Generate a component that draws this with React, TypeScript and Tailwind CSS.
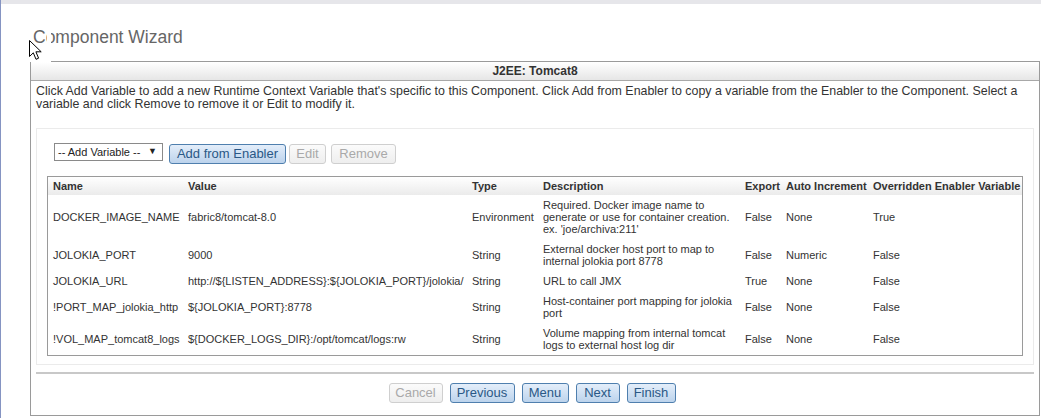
const rows = [
  {
    name: "DOCKER_IMAGE_NAME",
    value: "fabric8/tomcat-8.0",
    type: "Environment",
    desc: "Required. Docker image name to generate or use for container creation. ex. 'joe/archiva:211'",
    exp: "False",
    auto: "None",
    over: "True",
  },
  {
    name: "JOLOKIA_PORT",
    value: "9000",
    type: "String",
    desc: "External docker host port to map to internal jolokia port 8778",
    exp: "False",
    auto: "Numeric",
    over: "False",
  },
  {
    name: "JOLOKIA_URL",
    value: "http://${LISTEN_ADDRESS}:${JOLOKIA_PORT}/jolokia/",
    type: "String",
    desc: "URL to call JMX",
    exp: "True",
    auto: "None",
    over: "False",
  },
  {
    name: "!PORT_MAP_jolokia_http",
    value: "${JOLOKIA_PORT}:8778",
    type: "String",
    desc: "Host-container port mapping for jolokia port",
    exp: "False",
    auto: "None",
    over: "False",
  },
  {
    name: "!VOL_MAP_tomcat8_logs",
    value: "${DOCKER_LOGS_DIR}:/opt/tomcat/logs:rw",
    type: "String",
    desc: "Volume mapping from internal tomcat logs to external host log dir",
    exp: "False",
    auto: "None",
    over: "False",
  },
];

const blueBtn =
  "h-[20px] px-0 rounded-[3px] border border-[#4f7fae] bg-linear-to-b from-[#e4eefa] to-[#bcd3ec] text-[13px] leading-[18px] text-[#2a5886]";
const greyBtn =
  "h-[20px] px-0 rounded-[3px] border border-[#cfcfcf] bg-linear-to-b from-[#fbfbfb] to-[#eeeeee] text-[13px] leading-[18px] text-[#a9a9a9]";

function Cursor() {
  return (
    <>
      {/* white backing left behind by the captured pointer */}
      <div className="absolute left-[46px] top-[28px] w-[4px] h-[34px] bg-white" />
      <div className="absolute left-[28px] top-[47px] w-[22px] h-[15px] bg-white" />
      <svg className="absolute left-[28px] top-[40px]" width="14" height="21" viewBox="0 0 14 21">
        <path
          d="M0.5 0.5 L0.5 16.5 L4.3 12.8 L7 19.3 L9.6 18.2 L6.9 11.8 L12.2 11.8 Z"
          fill="white"
          stroke="black"
          strokeWidth="1"
          strokeLinejoin="miter"
        />
      </svg>
    </>
  );
}

export default function App() {
  return (
    <div className="relative w-[1041px] h-[418px] overflow-hidden bg-white border-l border-[#8594c2] font-['Liberation_Sans',Arial,sans-serif] text-[#333]">
      <div className="h-[4px] bg-[#e6e6ea]" />

      <h1 className="mt-[23px] pl-[32px] h-[20px] text-[17.5px] leading-[20px] text-[#666] font-normal">
        Component Wizard
      </h1>

      {/* Wizard panel */}
      <div className="ml-[29px] mt-[14px] w-[1010px] border border-[#9a9a9a]">
        <div className="h-[19px] border-b border-[#a8a8a8] bg-linear-to-b from-white to-[#e6e6e6] text-center text-[12px] leading-[18px] font-bold text-[#333]">
          J2EE: Tomcat8
        </div>

        <p className="pt-[4px] px-[5px] text-[12.4px] leading-[13px]">
          Click Add Variable to add a new Runtime Context Variable that's specific to this Component. Click Add from
          Enabler to copy a variable from the Enabler to the Component. Select a variable and click Remove to remove it
          or Edit to modify it.
        </p>

        <div className="mx-[5px] mt-[17px] border border-[#ebebeb] px-[10px] pt-[14px] pb-[8px]">
          <div className="flex items-start ml-[7px]">
            <div className="w-[109px] h-[18px] border border-[#8a8a8a] bg-white flex items-center justify-between pl-[3px] pr-[5px] text-[11px] text-[#222]">
              <span>-- Add Variable --</span>
              <span className="text-[9px]">▼</span>
            </div>
            <button className={`${blueBtn} ml-[6px] mt-[1px] w-[117px]`}>Add from Enabler</button>
            <button className={`${greyBtn} ml-[3px] mt-[1px] w-[37px]`}>Edit</button>
            <button className={`${greyBtn} ml-[5px] mt-[1px] w-[65px]`}>Remove</button>
          </div>

          <div className="mt-[12px] border border-[#9a9a9a]">
            <table className="w-full table-fixed border-collapse text-[11px] leading-[12px]">
              <colgroup>
                <col className="w-[135px]" />
                <col className="w-[284px]" />
                <col className="w-[71px]" />
                <col className="w-[202px]" />
                <col className="w-[41px]" />
                <col className="w-[87px]" />
                <col />
              </colgroup>
              <thead>
                <tr className="bg-linear-to-b from-white to-[#ebebeb] text-left">
                  {["Name", "Value", "Type", "Description", "Export", "Auto Increment", "Overridden Enabler Variable"].map(
                    (h) => (
                      <th key={h} className="pl-[5px] py-[3px] font-bold whitespace-nowrap overflow-hidden">
                        {h}
                      </th>
                    )
                  )}
                </tr>
              </thead>
              <tbody>
                {rows.map((r) => (
                  <tr key={r.name}>
                    <td className="pl-[5px] py-[4px] whitespace-nowrap">{r.name}</td>
                    <td className="pl-[5px] py-[4px] whitespace-nowrap">{r.value}</td>
                    <td className="pl-[5px] py-[4px] whitespace-nowrap">{r.type}</td>
                    <td className="px-[5px] py-[4px]">{r.desc}</td>
                    <td className="pl-[5px] py-[4px] whitespace-nowrap">{r.exp}</td>
                    <td className="pl-[5px] py-[4px] whitespace-nowrap">{r.auto}</td>
                    <td className="pl-[5px] py-[4px] whitespace-nowrap">{r.over}</td>
                  </tr>
                ))}
              </tbody>
            </table>
          </div>
        </div>

        <div className="mx-[5px] mt-[7px] h-[2px] bg-[#c8c8c8]" />

        <div className="flex justify-center gap-[7px] mt-[9px] pb-[12px] pr-[6px]">
          <button className={`${greyBtn} w-[54px]`}>Cancel</button>
          <button className={`${blueBtn} w-[65px]`}>Previous</button>
          <button className={`${blueBtn} w-[47px]`}>Menu</button>
          <button className={`${blueBtn} w-[44px]`}>Next</button>
          <button className={`${blueBtn} w-[49px]`}>Finish</button>
        </div>
      </div>

      <Cursor />
    </div>
  );
}
